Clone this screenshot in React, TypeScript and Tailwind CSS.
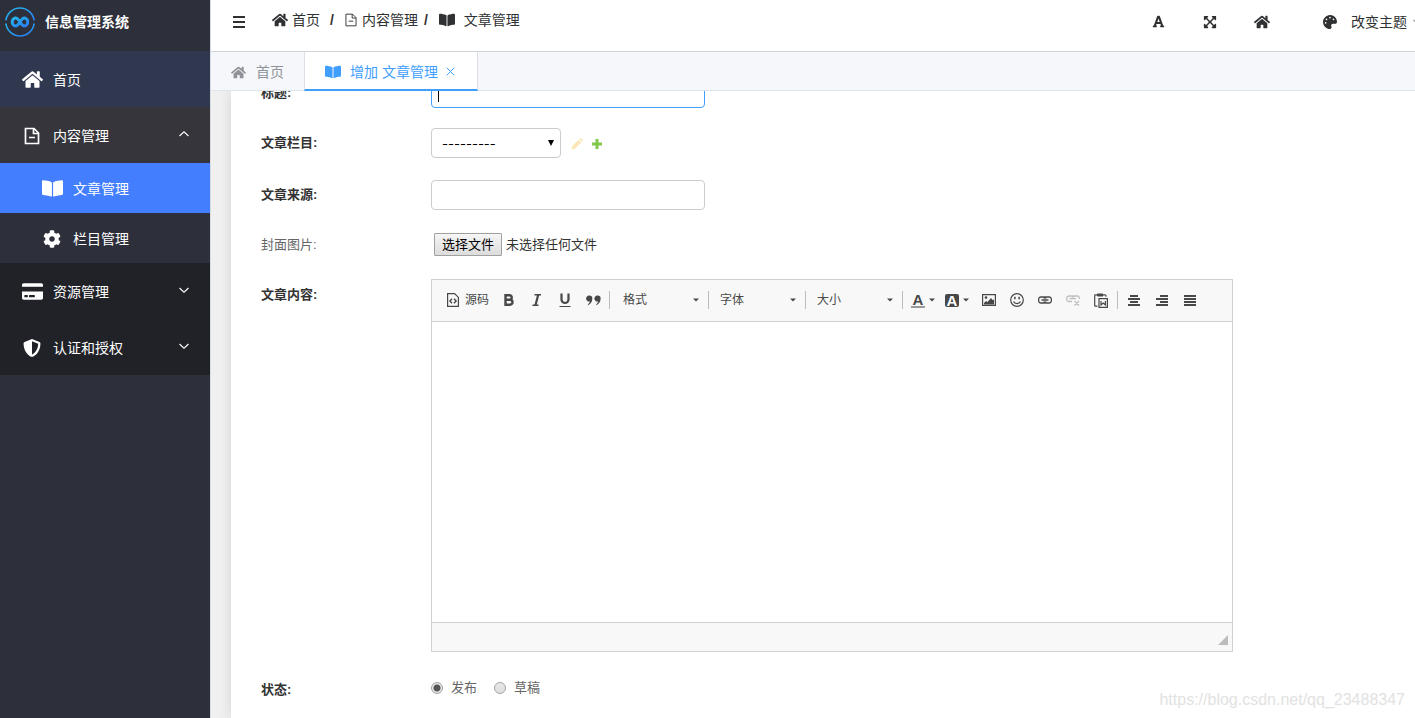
import { ReactNode, useRef, useState } from "react";
import clsx from "clsx";
import {
  FaBookOpen,
  FaCog,
  FaCreditCard,
  FaExpandArrowsAlt,
  FaFont,
  FaHome,
  FaPalette,
  FaShieldAlt,
} from "react-icons/fa";

const Logo = () => (
  <svg width="30" height="32" viewBox="0 0 30 32" fill="none" aria-hidden="true">
    <defs>
      <linearGradient id="logo" x1="0" y1="0" x2="1" y2="1">
        <stop offset="0" stopColor="#22b8ee" />
        <stop offset="1" stopColor="#2b7cf0" />
      </linearGradient>
    </defs>
    <path d="M.9 14.5a14.2 14.2 0 0 1 28.2 0" stroke="url(#logo)" strokeWidth="1.6" />
    <path d="M.9 17.5a14.2 14.2 0 0 0 28.2 0" stroke="url(#logo)" strokeWidth="1.6" />
    <path
      d="M15 16c-1.6-2.6-2.6-4-4.400-4a3.400 4 0 0 0 0 8c1.800 0 2.800-1.400 4.400-4s2.600-4 4.400-4a3.400 4 0 0 1 0 8c-1.800 0-2.800-1.400-4.400-4z"
      stroke="url(#logo)"
      strokeWidth="3"
    />
  </svg>
);

const DocIcon = ({ size, thin }: { size: number; thin?: boolean }) => (
  <svg
    width={size}
    height={size}
    viewBox="0 0 18 18"
    fill="none"
    stroke="currentColor"
    strokeWidth={thin ? 1.2 : 1.7}
    aria-hidden="true"
  >
    <path d="M2.500 1.500h8.500l4.500 4.500v10.500h-13z" />
    <path d="M10.500 1.500v5h5M6 10.500h6" />
  </svg>
);

const Chevron = ({ up }: { up?: boolean }) => (
  <svg width="10" height="6" viewBox="0 0 10 6" fill="none" stroke="currentColor" aria-hidden="true">
    <path d={up ? "M.5 5 5 .8 9.500 5" : "M.5 1 5 5.200 9.500 1"} strokeWidth="1.1" />
  </svg>
);

const Caret = () => (
  <svg width="6" height="4" viewBox="0 0 6 4" fill="#484848" aria-hidden="true">
    <path d="M0 .5h6L3 3.500z" />
  </svg>
);

interface MenuItemProps {
  icon: ReactNode;
  label: string;
  className: string;
  arrow?: "up" | "down";
  sub?: boolean;
}

const MenuItem = ({ icon, label, className, arrow, sub }: MenuItemProps) => (
  <a
    href="#"
    className={clsx(
      "flex items-center pt-px pr-[21px] text-sm text-white",
      sub ? "h-[50px] pl-10" : "h-14 pl-5",
      className
    )}
  >
    <span className="mr-[9px] flex w-6 justify-center">{icon}</span>
    <span className="flex-1">{label}</span>
    {arrow && (
      <span className="pb-[3px]">
        <Chevron up={arrow === "up"} />
      </span>
    )}
  </a>
);

const Sidebar = () => (
  <aside className="w-[210px] shrink-0 bg-[#2d2f3a]">
    <div className="flex h-[51px] items-center gap-[10px] pb-[7px] pl-[5px] text-sm font-bold text-white">
      <Logo />
      信息管理系统
    </div>
    <nav>
      <MenuItem icon={<FaHome size={21} />} label="首页" className="bg-[#30384f]" />
      <MenuItem icon={<DocIcon size={18} />} label="内容管理" className="bg-[#35353b]" arrow="up" />
      <MenuItem icon={<FaBookOpen size={21} />} label="文章管理" className="bg-[#437eff]" sub />
      <MenuItem icon={<FaCog size={18} />} label="栏目管理" className="bg-[#2d2f3a]" sub />
      <MenuItem icon={<FaCreditCard size={21} />} label="资源管理" className="bg-[#212128]" arrow="down" />
      <MenuItem icon={<FaShieldAlt size={18} />} label="认证和授权" className="bg-[#212128]" arrow="down" />
    </nav>
  </aside>
);

const TopBar = () => (
  <header className="flex h-[52px] shrink-0 items-center border-b border-[#cfd4db] pb-2 text-sm text-[#303133]">
    <button type="button" aria-label="菜单" className="ml-[22px]">
      <svg width="12" height="12" viewBox="0 0 12 12" fill="currentColor" aria-hidden="true">
        <path d="M0 0h12v2H0zM0 5h12v2H0zM0 10h12v2H0z" />
      </svg>
    </button>
    <nav className="ml-[27px] flex items-center pb-1">
      <a href="#" className="flex items-center gap-1">
        <FaHome size={16} />
        首页
      </a>
      <span className="mx-[10px] font-bold">/</span>
      <a href="#" className="flex items-center gap-1">
        <DocIcon size={14} thin />
        内容管理
      </a>
      <span className="mr-[11px] ml-[6px] font-bold">/</span>
      <a href="#" className="flex items-center gap-[9px]">
        <FaBookOpen size={16} />
        文章管理
      </a>
    </nav>
    <div className="ml-auto flex items-center">
      <button type="button" aria-label="字体" className="mr-[38px]">
        <FaFont size={13} />
      </button>
      <button type="button" aria-label="全屏" className="mr-[37px]">
        <FaExpandArrowsAlt size={14} />
      </button>
      <button type="button" aria-label="主页" className="mr-[53px]">
        <FaHome size={16} />
      </button>
      <button type="button" className="-mr-2 flex items-center">
        <FaPalette size={14} className="mr-[14px]" />
        改变主题
        <span className="ml-[6px] text-[#909399]">
          <Chevron />
        </span>
      </button>
    </div>
  </header>
);

const Tabs = () => (
  <div className="flex h-[39px] shrink-0 border-b border-[#dfe3ea] bg-[#f5f7fb] text-sm">
    <button type="button" className="flex h-[39px] items-center gap-[10px] px-5 pt-px text-[#909399]">
      <FaHome size={15} />
      首页
    </button>
    <div className="flex h-[39px] items-center border-x border-b-2 border-x-[#dcdfe6] border-b-[#409eff] bg-white pt-[2px] pr-[22px] pl-5 text-[#409eff]">
      <button type="button" className="flex items-center gap-[9px]">
        <FaBookOpen size={16} />
        增加 文章管理
      </button>
      <button type="button" aria-label="关闭" className="ml-2">
        <svg width="9" height="9" viewBox="0 0 9 9" stroke="currentColor" aria-hidden="true">
          <path d="M.7.7l7.600 7.600M8.300.7.7 8.300" />
        </svg>
      </button>
    </div>
  </div>
);

interface RowProps {
  label: string;
  id: string;
  className?: string;
  labelClass?: string;
  children: ReactNode;
}

const Row = ({ label, id, className, labelClass, children }: RowProps) => (
  <div className={clsx("grid grid-cols-[170px_1fr]", className)}>
    <label htmlFor={id} className={clsx("text-[13px]", labelClass ?? "leading-8 font-bold text-[#333]")}>
      {label}
    </label>
    <div className="flex min-w-0 items-center">{children}</div>
  </div>
);

const Tool = ({ label, children }: { label: string; children: ReactNode }) => (
  <button type="button" aria-label={label} className="flex h-7 w-7 shrink-0 items-center justify-center">
    {children}
  </button>
);

const Divider = ({ className }: { className?: string }) => (
  <span className={clsx("h-[18px] w-px shrink-0 bg-[#bcbcbc]", className)} />
);

const ToolSelect = ({ label }: { label: string }) => (
  <div className="relative w-24 shrink-0">
    <select aria-label={label} className="block h-7 w-full appearance-none bg-transparent pl-[11px] text-xs text-[#484848]">
      <option>{label}</option>
    </select>
    <span className="pointer-events-none absolute top-3 right-[9px]">
      <Caret />
    </span>
  </div>
);

const ColorTool = ({ label, children }: { label: string; children: ReactNode }) => (
  <button type="button" aria-label={label} className="flex h-7 w-[34px] shrink-0 items-center gap-1 px-1">
    {children}
    <Caret />
  </button>
);

const Lines = ({ d }: { d: string }) => (
  <svg width="12" height="11" viewBox="0 0 12 11" fill="currentColor" aria-hidden="true">
    <path d={d} />
  </svg>
);

const LETTER_A = "text-[15px] leading-[13px] font-bold";

const Toolbar = () => (
  <div className="flex h-[42px] items-center overflow-hidden border-b border-[#d1d1d1] bg-[#f8f8f8] pb-px pl-[9px] text-xs text-[#484848]">
    <button type="button" className="flex h-7 shrink-0 items-center gap-[6px] px-[6px]">
      <svg width="12" height="14" viewBox="0 0 12 14" fill="none" stroke="currentColor" strokeWidth="1.200" aria-hidden="true">
        <path d="M.6.6h7l3.800 3.800v9H.6z" />
        <path d="M5 5.800 2.900 8 5 10.200M7 5.800 9.100 8 7 10.200" strokeWidth="1.400" />
      </svg>
      源码
    </button>
    <Tool label="加粗">
      <svg width="10" height="12" viewBox="0 0 10 12" fill="none" stroke="currentColor" strokeWidth="2.400" aria-hidden="true">
        <path d="M1.500 1.200H5.500a2.200 2.200 0 0 1 0 4.500H1.500zM1.500 5.700H6a2.500 2.500 0 0 1 0 5H1.500z" />
      </svg>
    </Tool>
    <Tool label="倾斜">
      <svg width="10" height="12" viewBox="0 0 10 12" fill="none" stroke="currentColor" aria-hidden="true">
        <path d="M2.500 .8h6.500M.5 11.200H6.500" strokeWidth="1.500" />
        <path d="M6.300.5 3.400 11.500" strokeWidth="2.200" />
      </svg>
    </Tool>
    <Tool label="下划线">
      <svg width="12" height="14" viewBox="0 0 12 14" fill="none" stroke="currentColor" aria-hidden="true">
        <path d="M2.500 .5v6a3.500 3.500 0 0 0 7 0V.5" strokeWidth="2.200" />
        <path d="M.5 13.500h11" />
      </svg>
    </Tool>
    <Tool label="引用">
      <svg width="15" height="11" viewBox="0 0 15 11" fill="currentColor" aria-hidden="true">
        <path d="M3.300.5a3 3 0 0 1 3 3.200c0 3.200-1.800 5.600-4.600 6.500 0-.6.300-1 .8-1.500.8-.8 1.200-1.500 1.300-2.300A3 3 0 1 1 3.300.5zM11.600.5a3 3 0 0 1 3 3.200c0 3.200-1.800 5.600-4.600 6.500 0-.6.300-1 .8-1.500.8-.8 1.200-1.500 1.300-2.300A3 3 0 1 1 11.600.5z" />
      </svg>
    </Tool>
    <Divider className="mx-[2px]" />
    <ToolSelect label="格式" />
    <Divider />
    <ToolSelect label="字体" />
    <Divider />
    <ToolSelect label="大小" />
    <Divider className="mr-1" />
    <ColorTool label="文本颜色">
      <span className={clsx("w-[14px] border-b-2 border-[#999] text-center", LETTER_A)}>A</span>
    </ColorTool>
    <ColorTool label="背景颜色">
      <span className={clsx("w-[14px] rounded-xs bg-[#484848] text-center text-white", LETTER_A)}>A</span>
    </ColorTool>
    <Tool label="图像">
      <svg width="14" height="12" viewBox="0 0 14 12" aria-hidden="true">
        <path d="M.6.6h12.800v10.800H.6z" fill="none" stroke="currentColor" strokeWidth="1.200" />
        <circle cx="4" cy="3.600" r="1.300" fill="currentColor" />
        <path d="M2 10.500V9l2-2 1.500 1 3.500-4 1.500 2L12 5.500v5z" fill="currentColor" />
      </svg>
    </Tool>
    <Tool label="表情符">
      <svg width="14" height="14" viewBox="0 0 14 14" fill="none" stroke="currentColor" aria-hidden="true">
        <circle cx="7" cy="7" r="6.300" strokeWidth="1.200" />
        <path d="M4.900 3.700v2.500M9.100 3.700v2.500" strokeWidth="1.500" />
        <path d="M3.500 8.500c1.300 2.700 5.700 2.700 7 0" strokeWidth="1.300" />
      </svg>
    </Tool>
    <Tool label="超链接">
      <svg width="14" height="8" viewBox="0 0 14 8" fill="none" stroke="currentColor" strokeWidth="1.300" aria-hidden="true">
        <path d="M6 1H3a2.400 2.400 0 0 0-2.300 3A2.400 2.400 0 0 0 3 7h3a2 2 0 0 0 2-1.500M8 1h3a2.400 2.400 0 0 1 2.300 3A2.400 2.400 0 0 1 11 7H8M6 1a2 2 0 0 1 2 1.500M8 1a2 2 0 0 0-2 1.500M8 7a2 2 0 0 1-2-1.500M3.500 4h7" />
      </svg>
    </Tool>
    <Tool label="取消超链接">
      <svg width="14" height="12" viewBox="0 0 14 12" fill="none" stroke="#c0c0c0" strokeWidth="1.300" aria-hidden="true">
        <path d="M6 2H3a2.300 2.300 0 0 0-2.300 2.500A2.300 2.300 0 0 0 3 7.500h3M8 2h3a2.300 2.300 0 0 1 2.300 3M6 2a2 2 0 0 1 2 1.500M8 2a2 2 0 0 0-2 1.500M3.500 4.700h6.500M8.500 7l4.500 4.500M13 7l-4.500 4.500" />
      </svg>
    </Tool>
    <Tool label="从 MS Word 粘贴">
      <svg width="14" height="15" viewBox="0 0 14 15" fill="none" stroke="currentColor" aria-hidden="true">
        <path d="M3 1.800H1.500a.8.800 0 0 0-.8.800v9.800c0 .5.300.8.800.8H3.500M9.500 1.800H11a1 1 0 0 1 1 1v1" strokeWidth="1.200" />
        <path d="M3.500 1h5.500v2H3.500z" fill="currentColor" />
        <path d="M5 5.600h8.400v8.800H5z" strokeWidth="1.200" />
        <path d="M7 8v4l2.200-2 2.200 2V8" strokeWidth="1.200" />
      </svg>
    </Tool>
    <Divider className="mx-[2px]" />
    <Tool label="居中">
      <Lines d="M2 0h8v2H2zM0 3h12v2H0zM2 6h8v2H2zM0 9h12v2H0z" />
    </Tool>
    <Tool label="右对齐">
      <Lines d="M4 0h8v2H4zM0 3h12v2H0zM4 6h8v2H4zM0 9h12v2H0z" />
    </Tool>
    <Tool label="两端对齐">
      <Lines d="M0 0h12v2H0zM0 3h12v2H0zM0 6h12v2H0zM0 9h12v2H0z" />
    </Tool>
  </div>
);

const Editor = () => (
  <div className="w-full max-w-[802px] border border-[#d1d1d1]">
    <Toolbar />
    <textarea id="content" className="block h-[300px] w-full resize-none bg-white p-5 text-[13px] outline-none" />
    <div className="flex h-[29px] items-end justify-end border-t border-[#d1d1d1] bg-[#f8f8f8] pr-1 pb-[6px]">
      <svg width="10" height="10" viewBox="0 0 10 10" fill="#bcbcbc" aria-hidden="true">
        <path d="M10 0v10H0z" />
      </svg>
    </div>
  </div>
);

const RADIO =
  "h-3 w-3 appearance-none rounded-full border border-[#a5a5a5] bg-linear-to-b from-[#e8e8e8] to-[#dedede] checked:bg-[radial-gradient(circle,#555_0_3px,#e6e6e6_4px)]";

const ArticleForm = () => {
  const file = useRef<HTMLInputElement>(null);
  const [fileName, setFileName] = useState("未选择任何文件");
  const [status, setStatus] = useState("发布");

  return (
    <form className="-mt-[14px] min-h-full pl-[30px]">
      <Row label="标题:" id="title" className="mb-5 h-[30px]">
        <div className="relative w-full max-w-[274px]">
          <input id="title" className="block h-[30px] w-full rounded border border-[#409eff] px-[6px] text-[13px] outline-none" />
          <span className="pointer-events-none absolute top-2 left-[7px] h-4 w-px bg-black" />
        </div>
      </Row>
      <Row label="文章栏目:" id="category" className="mb-[22px] h-[30px]">
        <div className="relative w-[130px]">
          <select
            id="category"
            className="block h-[30px] w-full appearance-none rounded border border-[#ccc] bg-white pt-1 pl-[10px] font-[Inter,sans-serif] text-[13px] text-black"
          >
            <option>---------</option>
          </select>
          <svg
            className="pointer-events-none absolute top-3 right-[7px]"
            width="6"
            height="6"
            viewBox="0 0 6 6"
            aria-hidden="true"
          >
            <path d="M0 0h6L3 6z" />
          </svg>
        </div>
        <button type="button" aria-label="修改" className="ml-[10px] pt-[2px]">
          <svg width="12" height="12" viewBox="0 0 12 12" fill="#fbe7b5" aria-hidden="true">
            <path d="M.5 11.500 1.300 8 7.400 1.900l2.700 2.700L4 10.700zM8.100 1.200 9 .4c.4-.4.9-.4 1.300 0l1.300 1.300c.4.4.4.9 0 1.300l-.8.900z" />
          </svg>
        </button>
        <button type="button" aria-label="增加" className="ml-[9px] pt-[2px]">
          <svg width="10" height="10" viewBox="0 0 10 10" fill="#82c84c" aria-hidden="true">
            <path d="M3.500 0h3v3.500H10v3H6.500V10h-3V6.500H0v-3h3.500z" />
          </svg>
        </button>
      </Row>
      <Row label="文章来源:" id="source" className="mb-6 h-[30px]">
        <input id="source" className="h-[30px] w-full max-w-[274px] rounded border border-[#ccc] px-[6px] text-[13px]" />
      </Row>
      <Row label="封面图片:" id="cover" className="mb-[23px]" labelClass="leading-[23px] text-[#666]">
        <input
          ref={file}
          id="cover"
          type="file"
          className="hidden"
          onChange={(e) => setFileName(e.target.files?.[0]?.name ?? "未选择任何文件")}
        />
        <button
          type="button"
          onClick={() => file.current?.click()}
          className="ml-[3px] h-[23px] rounded-[1px] border border-[#a0a0a0] bg-linear-to-b from-[#f6f6f6] to-[#dcdcdc] px-[7px] text-[13px] leading-[21px] text-black"
        >
          选择文件
        </button>
        <span className="ml-1 text-[13px] leading-[23px] text-[#333]">{fileName}</span>
      </Row>
      <Row label="文章内容:" id="content" className="mb-6">
        <Editor />
      </Row>
      <Row label="状态:" id="status-发布" labelClass="leading-[28px] font-bold text-[#333]">
        {["发布", "草稿"].map((s) => (
          <label key={s} className="mr-[17px] flex items-center gap-2 pb-1 text-[13px] text-[#666]">
            <input
              id={`status-${s}`}
              type="radio"
              name="status"
              checked={status === s}
              onChange={() => setStatus(s)}
              className={RADIO}
            />
            {s}
          </label>
        ))}
      </Row>
    </form>
  );
};

const App = () => (
  <div className="relative flex h-screen overflow-hidden font-['Liberation_Sans','Noto_Sans_CJK_SC',sans-serif]">
    <Sidebar />
    <div className="flex min-w-0 flex-1 flex-col overflow-hidden border-l border-[#d8dce5] bg-white">
      <TopBar />
      <Tabs />
      <main className="min-h-0 flex-1 overflow-hidden bg-[#f0f0f0] pl-5">
        <div className="flow-root h-full bg-white shadow-[0_0_12px_rgba(0,0,0,0.12)]">
          <ArticleForm />
        </div>
      </main>
    </div>
    <span className="pointer-events-none absolute right-[10px] bottom-2 text-base leading-5 text-[#e2e2e2]">
      https://blog.csdn.net/qq_23488347
    </span>
  </div>
);

export default App;
